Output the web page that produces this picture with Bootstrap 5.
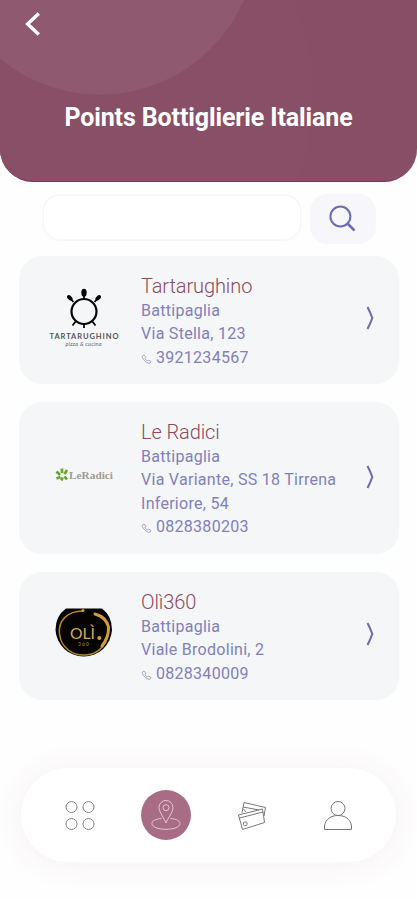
<!DOCTYPE html>
<html lang="it">
<head>
<meta charset="utf-8">
<meta name="viewport" content="width=device-width, initial-scale=1">
<title>Points Bottiglierie Italiane</title>
<link href="https://cdn.jsdelivr.net/npm/bootstrap@5.3.0/dist/css/bootstrap.min.css" rel="stylesheet">
<style>
body{font-family:Roboto,sans-serif;background:#fefefe;overflow-x:hidden}
.screen{width:417px;height:900px;overflow:hidden}
.hero{height:182px;border-radius:0 0 33px 33px;border-bottom:1px solid #7e3853;
background:radial-gradient(circle 158px at 100px -62px,#8f5a70 0 156px,transparent 157px),radial-gradient(circle 250px at 65px 95px,#884f66 0 245px,transparent 250px),#874e65}
.back{margin:12px 0 0 24px}
.hero h1{font:700 25px/30px Roboto,sans-serif;letter-spacing:-.12px;margin-top:66px;white-space:nowrap}
.search-row{padding:12px 41px 0 42px;gap:8px;height:74px}
.search-row input{width:260px;height:47px;border:2px solid #f7f6f9;border-radius:18px;background:#fff}
.search-row button{width:66px;height:50px;border:0;border-radius:18px;background:#f6f6fb}
.shops{gap:18px;padding:0 18px 0 19px}
.shop{background:#f4f6f8;border:0;border-radius:23px;height:128px;padding:18px 23px 0 0}
.shop.tall{height:152px}
.logo-box{width:122px;height:92px}
.tall .logo-box{height:116px}
.shop h2{font:300 20px/25px Roboto,sans-serif;color:#8d4a60;letter-spacing:-.1px;margin:0}
.shop p{font-size:16px;line-height:23.4px;letter-spacing:.28px;color:#8280b8;margin:0}
.shop p svg{margin-right:4px}
.dock{width:375px;height:94px;margin:68px 0 0 21px;border-radius:47px;background:#fff;box-shadow:0 2px 28px 4px rgba(140,50,90,.06);padding:0 33px 0 34px}
.dock a{width:50px;height:50px}
.dock a.current{background:#a96c85}
</style>
<script src="https://cdn.jsdelivr.net/npm/bootstrap@5.3.0/dist/js/bootstrap.bundle.min.js"></script>
</head>
<body>
<div class="screen d-flex flex-column">
<header class="hero flex-shrink-0">
<a href="#" class="back d-block" aria-label="Indietro"><svg class="d-block" width="18" height="25" fill="none" stroke="#fff" stroke-width="3.3"><path d="M14.8 1.5L3.6 12L14.8 22.5"/></svg></a>
<h1 class="text-white text-center mb-0">Points Bottiglierie Italiane</h1>
</header>
<form class="search-row d-flex flex-shrink-0">
<input type="text" class="form-control" aria-label="Cerca">
<button type="button" class="btn p-0 d-flex justify-content-center flex-shrink-0" aria-label="Cerca"><svg width="32" height="48" fill="none" stroke="#706cad" stroke-width="2"><circle cx="13.4" cy="22.5" r="10"/><path d="M20.5 29.5L27.5 36.5" stroke-width="2.5"/></svg></button>
</form>
<main class="shops d-flex flex-column">
<article class="shop card flex-row">
<div class="logo-box flex-shrink-0"><svg width="122" height="92" fill="#080808"><circle cx="65" cy="37.5" r="12.5" fill="none" stroke="#080808" stroke-width="2.2"/><ellipse cx="65" cy="18.8" rx="2.7" ry="4"/><path d="M65 20v6M54.500 28l-4.500-5M75.500 28l4.500-5M57 47l-3.500 4.500M73 47l3.500 4.500M65 50v4" stroke="#080808" stroke-width="1.800"/><ellipse cx="50.8" cy="23.8" rx="2" ry="3.3" transform="rotate(-45 50.8 23.8)"/><ellipse cx="79.2" cy="23.8" rx="2" ry="3.3" transform="rotate(45 79.2 23.8)"/><text x="30.500" y="64.500" font-family="Lato,sans-serif" font-size="7.500" font-weight="700" fill="#555" textLength="69">TARTARUGHINO</text><text x="46.500" y="71.500" font-family="Lato,sans-serif" font-size="5.500" font-style="italic" fill="#666" textLength="36">pizza &amp; cucina</text></svg></div>
<div class="flex-grow-1"><h2>Tartarughino</h2><p>Battipaglia<br>Via Stella, 123<br><svg width="11" height="10" fill="none" stroke="#9795b9" stroke-width=".8"><path d="M1 2.500L3 1L5 3.500L3.800 4.500Q5 6.500 6.500 7L7.500 6L10 7.500L9 9.300Q7.500 9.700 5 8Q1.500 5.500 1 2.500Z"/></svg>3921234567</p></div>
<svg class="flex-shrink-0 mt-4" width="10" height="38" fill="none" stroke="#706cad" stroke-width="2.100"><path d="M1.500 9Q4.400 14.500 6.300 20Q4.400 25.500 1.500 31"/></svg>
</article>
<article class="shop card flex-row tall">
<div class="logo-box flex-shrink-0"><svg width="122" height="116"><path d="M37.500 50.500l3.500 3.500M43 47.500v4.500M48 49l-2.500 4M37.500 57.500l4-1.500M42.500 59.500l1-3M48 58.500l-2.500-3" transform="translate(0 1)" stroke="#65a62b" stroke-width="2.700"/><text x="50" y="58.500" font-family="Liberation Serif,serif" font-size="11" font-weight="700" fill="#a09c94" textLength="44" lengthAdjust="spacingAndGlyphs">LeRadici</text></svg></div>
<div class="flex-grow-1"><h2>Le Radici</h2><p>Battipaglia<br>Via Variante, SS 18 Tirrena<br>Inferiore, 54<br><svg width="11" height="10" fill="none" stroke="#9795b9" stroke-width=".8"><path d="M1 2.500L3 1L5 3.500L3.800 4.500Q5 6.500 6.500 7L7.500 6L10 7.500L9 9.300Q7.500 9.700 5 8Q1.500 5.500 1 2.500Z"/></svg>0828380203</p></div>
<svg class="flex-shrink-0" style="margin-top:37px" width="10" height="38" fill="none" stroke="#706cad" stroke-width="2.100"><path d="M1.500 9Q4.400 14.500 6.300 20Q4.400 25.500 1.500 31"/></svg>
</article>
<article class="shop card flex-row">
<div class="logo-box flex-shrink-0"><svg width="122" height="92"><path d="M47 18.500H83Q93 26 93 40A28.300 28.300 0 0 1 36.500 40Q36.500 26 47 18.500Z" fill="#050400"/><path d="M64 21C48 21 39 31 40.500 44C42 57 53 66 67 65C81 64 90 52 89 39" fill="none" stroke="#b88430" stroke-width="1.500"/><path d="M76 24Q87 27 89.500 37Q90 47 83 56" fill="none" stroke="#d39b3d" stroke-width="3" stroke-linecap="round"/><circle cx="64" cy="20.500" r="1.500" fill="#d39b3d"/><circle cx="80.300" cy="48" r="2" fill="#d39b3d"/><text x="51" y="48.500" font-family="Lato,sans-serif" font-size="15.500" fill="#d8a75c" textLength="25" lengthAdjust="spacingAndGlyphs">OLÌ</text><text x="59" y="55.500" font-family="Lato,sans-serif" font-size="5" font-weight="700" fill="#8d6328" textLength="11">360</text></svg></div>
<div class="flex-grow-1"><h2>Olì360</h2><p>Battipaglia<br>Viale Brodolini, 2<br><svg width="11" height="10" fill="none" stroke="#9795b9" stroke-width=".8"><path d="M1 2.500L3 1L5 3.500L3.800 4.500Q5 6.500 6.500 7L7.500 6L10 7.500L9 9.300Q7.500 9.700 5 8Q1.500 5.500 1 2.500Z"/></svg>0828340009</p></div>
<svg class="flex-shrink-0 mt-4" width="10" height="38" fill="none" stroke="#706cad" stroke-width="2.100"><path d="M1.500 9Q4.400 14.500 6.300 20Q4.400 25.500 1.500 31"/></svg>
</article>
</main>
<nav class="dock d-flex align-items-center justify-content-between flex-shrink-0">
<a href="#" aria-label="Menu"><svg width="50" height="50" fill="none" stroke="#858585"><circle cx="16.500" cy="17" r="5.500"/><circle cx="33.500" cy="17" r="5.500"/><circle cx="16.500" cy="34" r="5.500"/><circle cx="33.500" cy="34" r="5.500"/></svg></a>
<a href="#" class="current rounded-circle" aria-label="Punti vendita"><svg width="50" height="50" fill="none" stroke="#e7c5d3"><path d="M25 33C23 28 18 22 18 17.500A7 7 0 0 1 32 17.500C32 22 27 28 25 33Z"/><circle cx="25" cy="17.700" r="3"/><path d="M20.500 28.500C14 29 11 31 11 33.500C11 37 17 39.300 25 39.300S39 37 39 33.500C39 31 36 29 29.500 28.500"/></svg></a>
<a href="#" aria-label="Carte"><svg width="50" height="50" fill="none" stroke="#777" stroke-linejoin="round"><path d="M11.500 25L35.500 19L37.500 32.500L15.500 39.500ZM12.500 28L36 22M15 23L17 12.500L38.500 17.500L37 26M16 17L32 20M19 22L16.500 19"/><rect x="16.500" y="32" width="3.500" height="3.500" rx="1"/></svg></a>
<a href="#" aria-label="Profilo"><svg width="50" height="50" fill="none" stroke="#777"><circle cx="25" cy="18.500" r="7"/><path d="M11.500 39.500V36C12.500 29 18 25.500 25 25.500S37.500 29 38.500 36V39.500Z"/></svg></a>
</nav>
</div>
</body>
</html>
